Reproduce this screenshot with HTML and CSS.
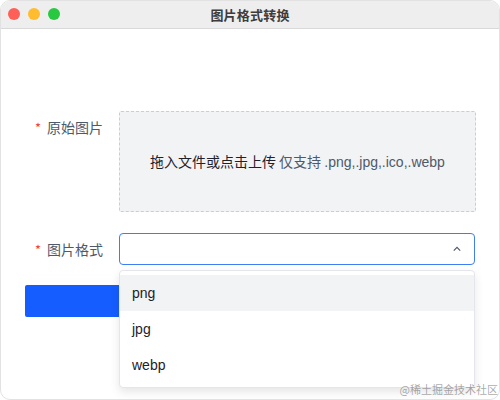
FILE: index.html
```html
<!DOCTYPE html>
<html lang="zh">
<head>
<meta charset="utf-8">
<title>图片格式转换</title>
<link rel="stylesheet" href="styles.css">
</head>
<body>
<div class="window">
  <div class="titlebar">
    <div class="lights">
      <span class="light red"></span>
      <span class="light yellow"></span>
      <span class="light green"></span>
    </div>
    <div class="title">图片格式转换</div>
  </div>
  <div class="content">
    <div class="form">
      <div class="row">
        <label class="label"><span class="star">*</span>原始图片</label>
        <div class="upload">
          <span class="upload-text">拖入文件或点击上传</span>
          <span class="upload-tip">仅支持 <span class="latin">.png,.jpg,.ico,.webp</span></span>
        </div>
      </div>
      <div class="row select-row">
        <label class="label"><span class="star">*</span>图片格式</label>
        <div class="select">
          <svg class="arrow" width="12" height="12" viewBox="0 0 12 12"><path d="M2.8 7.6 L6 4.4 L9.2 7.6" fill="none" stroke="#4e5969" stroke-width="1.2"/></svg>
          <ul class="dropdown">
            <li class="option active">png</li>
            <li class="option">jpg</li>
            <li class="option">webp</li>
          </ul>
        </div>
      </div>
      <button class="submit">转换</button>
    </div>
  </div>
</div>
<div class="watermark">@稀土掘金技术社区</div>
</body>
</html>
```
FILE: styles.css
```css
* { box-sizing: border-box; }
html, body { margin: 0; padding: 0; background: #fff; }
body {
  position: relative;
  width: 500px;
  height: 400px;
  font-family: "Noto Sans CJK SC", "Liberation Sans", sans-serif;
  overflow: hidden;
}
.window {
  position: relative;
  width: 500px;
  height: 400px;
  border-radius: 10px;
  border: 1px solid #e2e2e2;
  background: #fff;
  overflow: hidden;
}
.titlebar {
  position: relative;
  height: 28px;
  background: #efeeee;
  border-bottom: 1px solid #d9d9d9;
  display: flex;
  align-items: center;
  justify-content: center;
}
.lights {
  position: absolute;
  left: 7px;
  top: 7px;
  display: flex;
  gap: 8px;
}
.light {
  width: 12px;
  height: 12px;
  border-radius: 50%;
  display: block;
}
.red { background: #fe5f57; }
.yellow { background: #febc2e; }
.green { background: #28c840; }
.title {
  font-size: 13px;
  font-weight: 700;
  color: #3d3d3d;
  letter-spacing: 0.2px;
}
.content {
  padding: 82px 25px 0 24px;
}
.form {
  display: flex;
  flex-direction: column;
  gap: 21px;
}
.row {
  display: flex;
  align-items: flex-start;
}
.label {
  width: 94px;
  flex: none;
  padding-right: 16px;
  text-align: right;
  height: 32px;
  line-height: 32px;
  font-size: 14px;
  color: #4e5969;
}
.star {
  color: #f53f3f;
  margin-right: 6px;
  font-size: 13px;
}
.upload {
  flex: none;
  width: 357px;
  height: 101px;
  background: #f2f3f5;
  border: 1px dashed #c9cdd4;
  border-radius: 2px;
  display: flex;
  align-items: center;
  justify-content: center;
  font-size: 14px;
  padding-bottom: 1px;
}
.upload-text { color: #1d2129; }
.upload-tip { color: #4e5969; margin-left: 3px; }
.latin { font-family: "Liberation Sans", sans-serif; }
.select {
  position: relative;
  flex: none;
  width: 356px;
  height: 32px;
  border: 1px solid #3d7ef5;
  border-radius: 4px;
  background: #fff;
}
.arrow {
  position: absolute;
  right: 11px;
  top: 9px;
}
.dropdown {
  position: absolute;
  z-index: 2;
  left: -1px;
  top: 36px;
  width: 356px;
  margin: 0;
  padding: 4px 0;
  list-style: none;
  background: #fff;
  border: 1px solid #e5e6eb;
  border-radius: 4px;
  box-shadow: 0 4px 10px rgba(0, 0, 0, 0.1);
}
.option {
  height: 36px;
  line-height: 36px;
  padding-left: 12px;
  font-family: "Liberation Sans", "Noto Sans CJK SC", sans-serif;
  font-size: 14px;
  color: #1d2129;
}
.option.active { background: #f2f3f5; }
.submit {
  width: 450px;
  height: 32px;
  margin-top: -1px;
  border: none;
  border-radius: 2px;
  background: #165dff;
  color: #fff;
  font-size: 14px;
  font-family: inherit;
}
.watermark {
  position: absolute;
  z-index: 3;
  right: 2px;
  bottom: 4px;
  font-size: 11px;
  line-height: 14px;
  color: rgba(110, 110, 110, 0.6);
  font-family: "Noto Sans CJK SC", serif;
}
```
